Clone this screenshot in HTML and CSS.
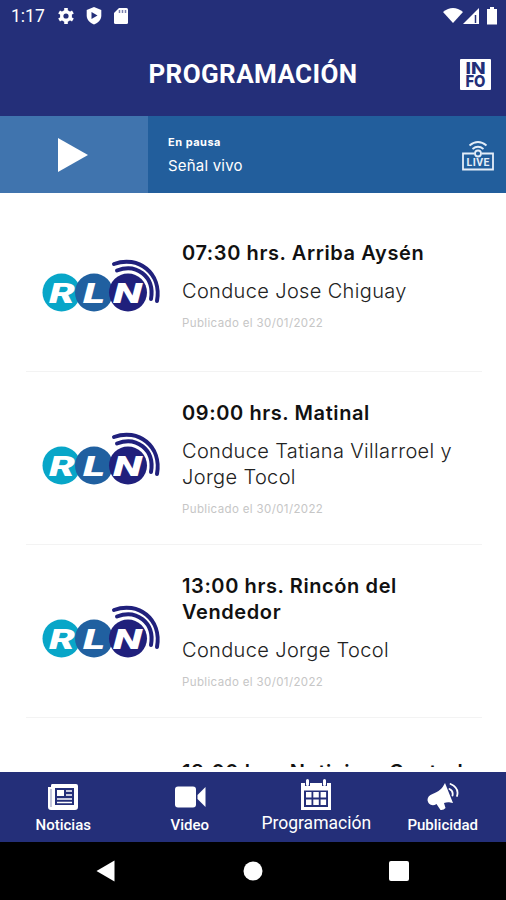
FILE: index.html
```
<!DOCTYPE html>
<html lang="es">
<head>
  <meta charset="UTF-8" />
  <meta name="viewport" content="width=device-width, initial-scale=1.0"/>
  <title>Programación</title>
  <link rel="stylesheet" href="styles.css">
</head>
<body>
  <!-- RLN logo, reused by every program -->
  <svg width="0" height="0" class="sprite">
    <symbol id="rln" viewBox="0 0 120 56">
      <circle cx="19.5" cy="34.500" r="19" fill="#08a6c8"/>
      <circle cx="52" cy="34.500" r="19" fill="#2060a0"/>
      <circle cx="86" cy="34.500" r="19" fill="#20207c"/>
      <g fill="none" stroke="#20207c" stroke-width="4" stroke-linecap="round">
        <path d="M72 6C96-3 120 15 115 43"/>
        <path d="M75 12.500C94 5 113 18 109 41"/>
      </g>
      <g class="logo-text">
        <text x="7" y="44.500" textLength="26" lengthAdjust="spacingAndGlyphs">R</text>
        <text x="41" y="44.500" textLength="22" lengthAdjust="spacingAndGlyphs">L</text>
        <text x="71" y="44.500" textLength="29" lengthAdjust="spacingAndGlyphs">N</text>
      </g>
    </symbol>
  </svg>

  <div class="statusbar">
    <span class="time">1:17</span>
    <svg width="16" height="16" viewBox="0 0 16 16">
      <circle cx="8" cy="8" r="4.200" fill="none" stroke="#fff" stroke-width="3.600"/>
      <path d="M8 0v16M1.100 4l13.800 8M1.100 12l13.800-8" stroke="#fff" stroke-width="3.600"/>
      <circle cx="8" cy="8" r="2.600" fill="#242f79"/>
    </svg>
    <svg width="16" height="18" viewBox="0 0 16 18">
      <path d="M8 0l7.300 3v5.500c0 4-3 7.500-7.300 9-4.300-1.500-7.300-5-7.300-9V3z" fill="#fff"/>
      <path d="M5.500 5v7l6-3.500z" fill="#242f79"/>
    </svg>
    <svg width="14" height="16" viewBox="0 0 14 16">
      <path d="M5 0h7.500Q14 0 14 1.500v13Q14 16 12.500 16h-11Q0 16 0 14.500V5z" fill="#fff"/>
      <path d="M5.500 2v3M8.500 2v3M11.500 2v3" stroke="#7a80ae" stroke-width="1.500"/>
    </svg>
    <svg class="signal" width="56" height="18" viewBox="0 0 56 18">
      <path d="M0 5Q10-3 20 5L10 16z" fill="#fff"/>
      <path d="M36 1v16H20z" fill="#fff"/>
      <path d="M32.500 8v8" stroke="#242f79" stroke-width="1.500"/>
      <path d="M47 0h4v2h3v15.500H44V2h3z" fill="#fff"/>
    </svg>
  </div>

  <header class="header">
    <h1>PROGRAMACIÓN</h1>
    <svg class="info" width="31" height="31" viewBox="0 0 31 31">
      <rect width="31" height="31" rx="1" fill="#fff"/>
      <text x="5.500" y="14.500" textLength="20" lengthAdjust="spacingAndGlyphs">IN</text>
      <text x="5.500" y="27.500" textLength="20" lengthAdjust="spacingAndGlyphs">FO</text>
    </svg>
  </header>

  <div class="player">
    <button class="play" aria-label="Reproducir">
      <svg width="30" height="34" viewBox="0 0 30 34"><path d="M0 0l30 17L0 34z" fill="#fff"/></svg>
    </button>
    <div class="player-text">
      <strong>En pausa</strong>
      <span>Señal vivo</span>
    </div>
    <svg class="live" width="32" height="30" viewBox="0 0 32 30">
      <g fill="none" stroke="#e4edf8" stroke-width="1.800">
        <path d="M7.500 4.500Q16-2.500 24.500 4.500M10.500 8Q16 3.500 21.500 8"/>
        <path d="M12.500 12.500H1v16h30v-16H19.500"/>
        <circle cx="16" cy="12.500" r="3"/>
      </g>
      <text x="4.500" y="25.300" textLength="23">LIVE</text>
    </svg>
  </div>

  <main class="list">
    <article class="program">
      <svg class="logo"><use href="#rln"/></svg>
      <div class="program-text">
        <h2>07:30 hrs. Arriba Aysén</h2>
        <p>Conduce Jose Chiguay</p>
        <small>Publicado el 30/01/2022</small>
      </div>
    </article>
    <article class="program">
      <svg class="logo"><use href="#rln"/></svg>
      <div class="program-text">
        <h2>09:00 hrs. Matinal</h2>
        <p>Conduce Tatiana Villarroel y Jorge Tocol</p>
        <small>Publicado el 30/01/2022</small>
      </div>
    </article>
    <article class="program">
      <svg class="logo"><use href="#rln"/></svg>
      <div class="program-text">
        <h2>13:00 hrs. Rincón del Vendedor</h2>
        <p>Conduce Jorge Tocol</p>
        <small>Publicado el 30/01/2022</small>
      </div>
    </article>
    <article class="program">
      <div class="logo"></div>
      <div class="program-text">
        <h2>18:00 hrs. Noticiero Central</h2>
        <p>&nbsp;</p>
        <small>&nbsp;</small>
      </div>
    </article>
  </main>

  <nav class="tabs">
    <a class="tab">
      <svg width="32" height="32" viewBox="0 0 32 32">
        <path d="M5 3h24q2 0 2 2v21q0 3-3 3H4q-3 0-3-3V6h3V5q0-2 1-2z" fill="#fff"/>
        <path d="M4 8v18" stroke="#8b90b8" stroke-width="1"/>
        <path d="M8 7h19v17H8z" fill="#242f79"/>
        <path d="M10 9h7v6h-7z" fill="#fff"/>
        <path d="M19 10h6M19 14h6M10 18h15M10 21.500h15" stroke="#fff" stroke-width="1.400"/>
      </svg>
      <span>Noticias</span>
    </a>
    <a class="tab">
      <svg width="32" height="32" viewBox="0 0 32 32">
        <rect x="1" y="5.500" width="21" height="21" rx="3" fill="#fff"/>
        <path d="M31.500 6v20L23.500 18v-4z" fill="#fff"/>
      </svg>
      <span>Video</span>
    </a>
    <a class="tab active">
      <svg width="32" height="32" viewBox="0 0 32 32">
        <path d="M1 4h30v27H1z" fill="#fff"/>
        <path d="M4 11.500h24V28H4z" fill="#242f79"/>
        <path d="M5 0h5v7H5zM22 0h5v7h-5z" fill="#242f79"/>
        <path d="M7.500 1.500v4M24.500 1.500v4" stroke="#fff" stroke-width="3" stroke-linecap="round"/>
        <path d="M6 13h5.500v5.500H6zM13.300 13h5.500v5.500h-5.500zM20.600 13h5.500v5.500h-5.500zM6 20.500h5.500V26H6zM13.300 20.500h5.500V26h-5.500zM20.600 20.500h5.500V26h-5.500z" fill="#fff"/>
      </svg>
      <span>Programación</span>
    </a>
    <a class="tab">
      <svg width="32" height="32" viewBox="0 0 32 32">
        <path d="M18 2l8 20c-4-1-6-1-9 0l1.500 5q-2 2.500-5 2l-4-6C5 26 1 23 .500 19c0-3 2-5 5-6C12 10.500 15 8 18 2z" fill="#fff"/>
        <path d="M22.500 8q4 2 3 6.500M23.500 3q9 4 6.500 12" fill="none" stroke="#fff" stroke-width="1.800" stroke-linecap="round"/>
      </svg>
      <span>Publicidad</span>
    </a>
  </nav>

  <div class="sysnav">
    <svg width="20" height="22" viewBox="0 0 20 22"><path d="M18.500 .500v21L.500 11z" fill="#fff"/></svg>
    <svg width="20" height="20" viewBox="0 0 20 20"><circle cx="10" cy="10" r="9.500" fill="#fff"/></svg>
    <svg width="20" height="20" viewBox="0 0 20 20"><rect width="20" height="20" rx="2" fill="#fff"/></svg>
  </div>
</body>
</html>
```
FILE: styles.css
```
* {
  box-sizing: border-box;
}
body {
  margin: 0;
  height: 900px;
  display: flex;
  flex-direction: column;
  overflow: hidden;
  background: #fff;
  font-family: Roboto, sans-serif;
}
.sprite {
  display: none;
}
h1, h2, p {
  margin: 0;
}

.statusbar {
  height: 32px;
  flex: none;
  display: flex;
  align-items: center;
  gap: 12px;
  padding: 0 7px 0 11px;
  background: #242f79;
  color: #fff;
}
.time {
  width: 35px;
  font-size: 17.5px;
}
.signal {
  margin-left: auto;
}

.header {
  height: 84px;
  flex: none;
  display: grid;
  grid-template-columns: 46px 1fr 46px;
  align-items: center;
  background: #242f79;
  color: #fff;
}
.header h1 {
  grid-column: 2;
  font-size: 26px;
  line-height: 30px;
  font-weight: 700;
  letter-spacing: 0.4px;
  text-align: center;
}
.info text {
  fill: #242f79;
  font-family: Inter, sans-serif;
  font-size: 16px;
  font-weight: 800;
}

.player {
  height: 77px;
  flex: none;
  display: flex;
  align-items: center;
  background: #225e9c;
  color: #fff;
}
.play {
  width: 148px;
  height: 77px;
  border: none;
  padding: 0 2px 0 0;
  display: flex;
  align-items: center;
  justify-content: center;
  background: #4074ae;
}
.player-text {
  flex: 1;
  padding: 1px 0 0 20px;
  display: flex;
  flex-direction: column;
}
.player-text strong {
  font-family: Inter, sans-serif;
  font-size: 11px;
  line-height: 22px;
  letter-spacing: 0.5px;
}
.player-text span {
  font-family: Inter, sans-serif;
  font-size: 15px;
  line-height: 26px;
  letter-spacing: 0.2px;
}
.live {
  margin: 3px 12px 0 0;
}
.live text {
  fill: #e4edf8;
  font-size: 10.5px;
  font-weight: 700;
}

.list {
  height: 574px;
  flex: none;
  padding: 6px 24px 0 26px;
  margin-bottom: 5px;
  overflow: hidden;
}
.program {
  min-height: 173px;
  display: flex;
  align-items: center;
  gap: 20px;
  padding: 1px 0 0 16px;
  border-bottom: 1px solid #f3f3f3;
}
.logo {
  width: 120px;
  height: 56px;
  flex: none;
}
.logo-text {
  fill: #fff;
  font-family: Roboto, sans-serif;
  font-size: 27px;
  font-weight: 900;
  font-style: italic;
}
.program-text {
  flex: 1;
  display: flex;
  flex-direction: column;
  gap: 12px;
  font-family: Inter, sans-serif;
}
.program-text h2 {
  font-size: 20px;
  line-height: 26px;
  font-weight: 600;
  letter-spacing: 0.6px;
  color: #111;
}
.program-text p {
  font-size: 20px;
  line-height: 26px;
  font-weight: 300;
  letter-spacing: 0.35px;
  color: #222;
}
.program-text small {
  margin-top: -1px;
  font-size: 11.5px;
  line-height: 16px;
  letter-spacing: 0.37px;
  color: #c6c6c6;
}

.tabs {
  height: 70px;
  flex: none;
  display: grid;
  grid-template-columns: repeat(4, 1fr);
  background: #242f79;
  color: #fff;
}
.tab {
  display: flex;
  flex-direction: column;
  align-items: center;
  padding-top: 9px;
  font-size: 15px;
  line-height: 24px;
  font-weight: 500;
}
.tab.active {
  padding-top: 7px;
  font-size: 17.5px;
  font-weight: 400;
}

.sysnav {
  flex: 1;
  display: flex;
  align-items: center;
  justify-content: space-between;
  padding: 0 97px 0 96px;
  background: #000;
}
```
